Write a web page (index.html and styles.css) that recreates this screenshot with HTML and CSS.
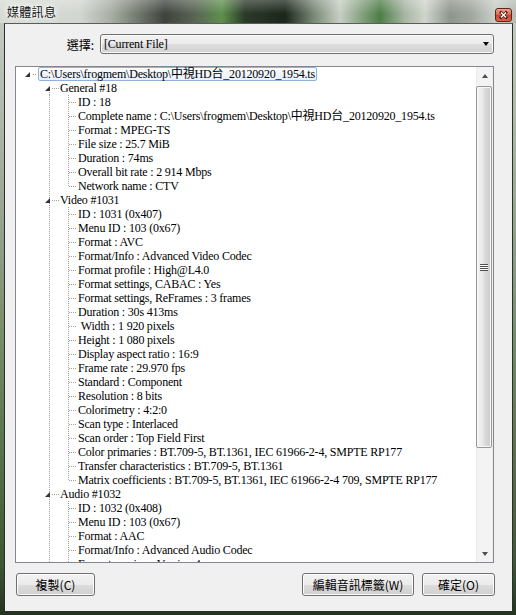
FILE: index.html
```html
<!DOCTYPE html>
<html lang="zh-Hant">
<head>
    <meta charset="UTF-8">
    <meta name="viewport" content="width=device-width, initial-scale=1.0">
    <title>媒體訊息</title>
    <link rel="stylesheet" href="styles.css">
</head>
<body>
    <div class="window">
        <div class="titlebar">
            <span class="title">媒體訊息</span>
            <span class="close-btn">
                <svg width="17" height="14" viewBox="0 0 17 14">
                    <defs>
                        <linearGradient id="closeGrad" x1="0" y1="0" x2="0" y2="1">
                            <stop offset="0" stop-color="#f0a898"/>
                            <stop offset="0.45" stop-color="#dc6c55"/>
                            <stop offset="0.5" stop-color="#c8412a"/>
                            <stop offset="1" stop-color="#e0684c"/>
                        </linearGradient>
                    </defs>
                    <rect x="0.5" y="0.5" width="16" height="13" rx="2.5" fill="url(#closeGrad)" stroke="#5a261b"/>
                    <path d="M6 4.5l5 5M11 4.5l-5 5" stroke="#4a1d14" stroke-width="2.8" stroke-linecap="square"/>
                    <path d="M6 4.5l5 5M11 4.5l-5 5" stroke="#ffffff" stroke-width="1.4"/>
                </svg>
            </span>
        </div>

        <div class="client">
            <div class="select-row">
                <span class="select-label">選擇:</span>
                <div class="combo">
                    <span class="combo-text">[Current File]</span>
                    <span class="combo-arrow"></span>
                </div>
            </div>

            <div class="tree">
                <div class="tree-body">
                    <div class="row lv0"><span class="tri"></span><span class="dash"></span><span class="sel">C:\Users\frogmem\Desktop\中視HD台_20120920_1954.ts</span></div>

                    <div class="row lv1 first"><span class="tri"></span><span class="dash"></span>General #18</div>
                    <div class="row lv2"><span class="dash"></span>ID : 18</div>
                    <div class="row lv2"><span class="dash"></span>Complete name : C:\Users\frogmem\Desktop\中視HD台_20120920_1954.ts</div>
                    <div class="row lv2"><span class="dash"></span>Format : MPEG-TS</div>
                    <div class="row lv2"><span class="dash"></span>File size : 25.7 MiB</div>
                    <div class="row lv2"><span class="dash"></span>Duration : 74ms</div>
                    <div class="row lv2"><span class="dash"></span>Overall bit rate : 2 914 Mbps</div>
                    <div class="row lv2 last"><span class="dash"></span>Network name : CTV</div>

                    <div class="row lv1"><span class="tri"></span><span class="dash"></span>Video #1031</div>
                    <div class="row lv2"><span class="dash"></span>ID : 1031 (0x407)</div>
                    <div class="row lv2"><span class="dash"></span>Menu ID : 103 (0x67)</div>
                    <div class="row lv2"><span class="dash"></span>Format : AVC</div>
                    <div class="row lv2"><span class="dash"></span>Format/Info : Advanced Video Codec</div>
                    <div class="row lv2"><span class="dash"></span>Format profile : High@L4.0</div>
                    <div class="row lv2"><span class="dash"></span>Format settings, CABAC : Yes</div>
                    <div class="row lv2"><span class="dash"></span>Format settings, ReFrames : 3 frames</div>
                    <div class="row lv2"><span class="dash"></span>Duration : 30s 413ms</div>
                    <div class="row lv2"><span class="dash"></span>&nbsp;Width : 1 920 pixels</div>
                    <div class="row lv2"><span class="dash"></span>Height : 1 080 pixels</div>
                    <div class="row lv2"><span class="dash"></span>Display aspect ratio : 16:9</div>
                    <div class="row lv2"><span class="dash"></span>Frame rate : 29.970 fps</div>
                    <div class="row lv2"><span class="dash"></span>Standard : Component</div>
                    <div class="row lv2"><span class="dash"></span>Resolution : 8 bits</div>
                    <div class="row lv2"><span class="dash"></span>Colorimetry : 4:2:0</div>
                    <div class="row lv2"><span class="dash"></span>Scan type : Interlaced</div>
                    <div class="row lv2"><span class="dash"></span>Scan order : Top Field First</div>
                    <div class="row lv2"><span class="dash"></span>Color primaries : BT.709-5, BT.1361, IEC 61966-2-4, SMPTE RP177</div>
                    <div class="row lv2"><span class="dash"></span>Transfer characteristics : BT.709-5, BT.1361</div>
                    <div class="row lv2 last"><span class="dash"></span>Matrix coefficients : BT.709-5, BT.1361, IEC 61966-2-4 709, SMPTE RP177</div>

                    <div class="row lv1"><span class="tri"></span><span class="dash"></span>Audio #1032</div>
                    <div class="row lv2"><span class="dash"></span>ID : 1032 (0x408)</div>
                    <div class="row lv2"><span class="dash"></span>Menu ID : 103 (0x67)</div>
                    <div class="row lv2"><span class="dash"></span>Format : AAC</div>
                    <div class="row lv2"><span class="dash"></span>Format/Info : Advanced Audio Codec</div>
                    <div class="row lv2"><span class="dash"></span>Format version : Version 4</div>
                </div>

                <div class="vscroll">
                    <div class="sb-btn"><span class="arrow-up"></span></div>
                    <div class="sb-track">
                        <div class="sb-thumb"><span class="grip"></span></div>
                    </div>
                    <div class="sb-btn"><span class="arrow-down"></span></div>
                </div>
            </div>

            <div class="button-row">
                <button class="btn btn-copy">複製(C)</button>
                <button class="btn btn-tag">編輯音訊標籤(W)</button>
                <button class="btn btn-ok">確定(O)</button>
            </div>
        </div>
    </div>
</body>
</html>
```

FILE: styles.css
```css
/* Windows 7 style "media info" dialog */
body {
    margin: 0;
    width: 516px;
    height: 615px;
    overflow: hidden;
    font-family: "Noto Sans CJK TC", "Liberation Sans", sans-serif;
    font-size: 12px;
    color: #000;
}
.window {
    width: 516px;
    height: 615px;
    display: flex;
    flex-direction: column;
    background: linear-gradient(to bottom, #c9cec6 0%, #9fab99 30%, #6d865f 60%, #3b5632 92%, #24331f 100%);
}

/* title bar */
.titlebar {
    height: 23px;
    display: flex;
    align-items: center;
    padding-left: 7px;
    background:
        linear-gradient(to bottom, rgba(255, 255, 255, 0.25), rgba(255, 255, 255, 0) 60%),
        linear-gradient(to right, #d7dbd5 0, #d2d6d0 80px, #a9b0a6 110px, #6d746a 140px, #3e443d 165px,
            #5a6555 195px, #5f8f4d 222px, #2b3a29 245px, #1c261c 285px, #7d8d7a 315px, #c7cec4 340px,
            #8aa585 360px, #4f7d48 380px, #a8b6a4 405px, #cfd5cc 425px, #8e968d 450px, #9fa69d 470px,
            #c9cec7 495px, #b5bcb2 516px);
}
.title {
    font-size: 12px;
    letter-spacing: 0.3px;
    color: #111;
    text-shadow: 0 0 6px #fff, 0 0 3px #fff, 0 0 10px rgba(255, 255, 255, 0.9);
}
.close-btn {
    margin-left: auto;
    margin-right: 4px;
    margin-top: 6px;
    display: flex;
}

/* client area */
.client {
    margin-left: 4px;
    width: 509px;
    height: 589px;
    box-sizing: border-box;
    border: 1px solid #2e2e2e;
    border-top-color: #5c5c5c;
    background-color: #f0f0f0;
    padding: 10px 18px 15px 10px;
    display: flex;
    flex-direction: column;
}

.select-row {
    display: flex;
    align-items: center;
    height: 20px;
}
.select-label {
    width: 79px;
    text-align: right;
    margin-right: 6px;
}
.combo {
    flex: 1;
    height: 20px;
    box-sizing: border-box;
    border: 1px solid #707070;
    border-radius: 3px;
    background: linear-gradient(#f2f2f2 0%, #ebebeb 50%, #dddddd 50%, #d2d2d2 100%);
    box-shadow: inset 0 0 0 1px #fafafa;
    display: flex;
    align-items: center;
    padding-left: 3px;
    font-family: "Liberation Serif", "Noto Sans CJK TC", serif;
    letter-spacing: -0.2px;
}
.combo-arrow {
    margin-left: auto;
    margin-right: 4px;
    width: 0;
    height: 0;
    border-style: solid;
    border-width: 4px 3.5px 0 3.5px;
    border-color: #000 transparent transparent transparent;
}

/* tree view */
.tree {
    margin-top: 12px;
    height: 497px;
    box-sizing: border-box;
    border: 1px solid #828790;
    background-color: #fff;
    display: flex;
}
.tree-body {
    flex: 1;
    overflow: hidden;
    font-family: "Liberation Serif", "Noto Sans CJK TC", serif;
    font-size: 12px;
    letter-spacing: -0.2px;
}
.row {
    height: 14px;
    line-height: 14px;
    display: flex;
    align-items: center;
    white-space: nowrap;
    background-repeat: no-repeat;
}
.tri {
    width: 0;
    height: 0;
    border-style: solid;
    border-width: 0 0 5px 5px;
    border-color: transparent transparent #333 transparent;
    margin-top: 1px;
}
.dash {
    height: 1px;
    background: repeating-linear-gradient(to right, #a0a0a0 0 1px, transparent 1px 2px);
}
.lv0 {
    padding-left: 9px;
}
.lv0 .dash {
    width: 4px;
    margin: 0 1px 0 3px;
}
.sel {
    display: inline-block;
    height: 12px;
    line-height: 12px;
    padding: 0 1px;
    border: 1px solid #8fb2dc;
    border-radius: 2px;
    background: linear-gradient(#fafcff, #e8f1fc);
}
.lv1 {
    padding-left: 29px;
    background-image: repeating-linear-gradient(#a0a0a0 0 1px, transparent 1px 2px);
    background-position: 33px 0;
    background-size: 1px 14px;
}
.lv1.first {
    background-position: 33px 7px;
    background-size: 1px 7px;
}
.lv1 .dash {
    width: 7px;
    margin: 0 1px 0 2px;
}
.lv2 {
    padding-left: 53px;
    background-image:
        repeating-linear-gradient(#a0a0a0 0 1px, transparent 1px 2px),
        repeating-linear-gradient(#a0a0a0 0 1px, transparent 1px 2px);
    background-position: 33px 0, 52px 0;
    background-size: 1px 14px, 1px 14px;
}
.lv2.last {
    background-size: 1px 14px, 1px 8px;
}
.lv2 .dash {
    width: 8px;
    margin-right: 1px;
}

/* scroll bar */
.vscroll {
    width: 17px;
    display: flex;
    flex-direction: column;
    background: linear-gradient(to right, #e3e3e3 0, #f3f3f3 1px, #f3f3f3 16px, #e9e9e9 17px);
}
.sb-btn {
    height: 17px;
    display: flex;
    align-items: center;
    justify-content: center;
}
.arrow-up, .arrow-down {
    width: 0;
    height: 0;
    border-style: solid;
}
.arrow-up {
    border-width: 0 3.5px 4px 3.5px;
    border-color: transparent transparent #4d4d4d transparent;
    margin-top: 1px;
}
.arrow-down {
    border-width: 4px 3.5px 0 3.5px;
    border-color: #4d4d4d transparent transparent transparent;
}
.sb-track {
    flex: 1;
    padding: 2px 1px 0 0;
}
.sb-thumb {
    height: 362px;
    box-sizing: border-box;
    border: 1px solid #979797;
    border-radius: 2px;
    background: linear-gradient(to right, #f4f4f4 0%, #e9e9e9 40%, #d8d8d8 60%, #cbcbcb 100%);
    box-shadow: inset 0 0 0 1px #f8f8f8;
    display: flex;
    align-items: center;
    justify-content: center;
}
.grip {
    width: 8px;
    height: 7px;
    background: repeating-linear-gradient(#4f4f4f 0 1px, #fcfcfc 1px 2px);
}

/* buttons */
.button-row {
    margin: 10px -1px 0 1px;
    display: flex;
}
.btn {
    height: 23px;
    padding: 0;
    border: 1px solid #707070;
    border-radius: 3px;
    background: linear-gradient(#f2f2f2 0%, #ebebeb 50%, #dddddd 50%, #cfcfcf 100%);
    box-shadow: inset 0 0 0 1px #fcfcfc;
    font-family: "Noto Sans CJK TC", "Liberation Sans", sans-serif;
    font-size: 12px;
    color: #000;
    line-height: 20px;
}
.btn-copy {
    width: 79px;
}
.btn-tag {
    width: 112px;
    margin-left: auto;
}
.btn-ok {
    width: 73px;
    margin-left: 8px;
}
```
